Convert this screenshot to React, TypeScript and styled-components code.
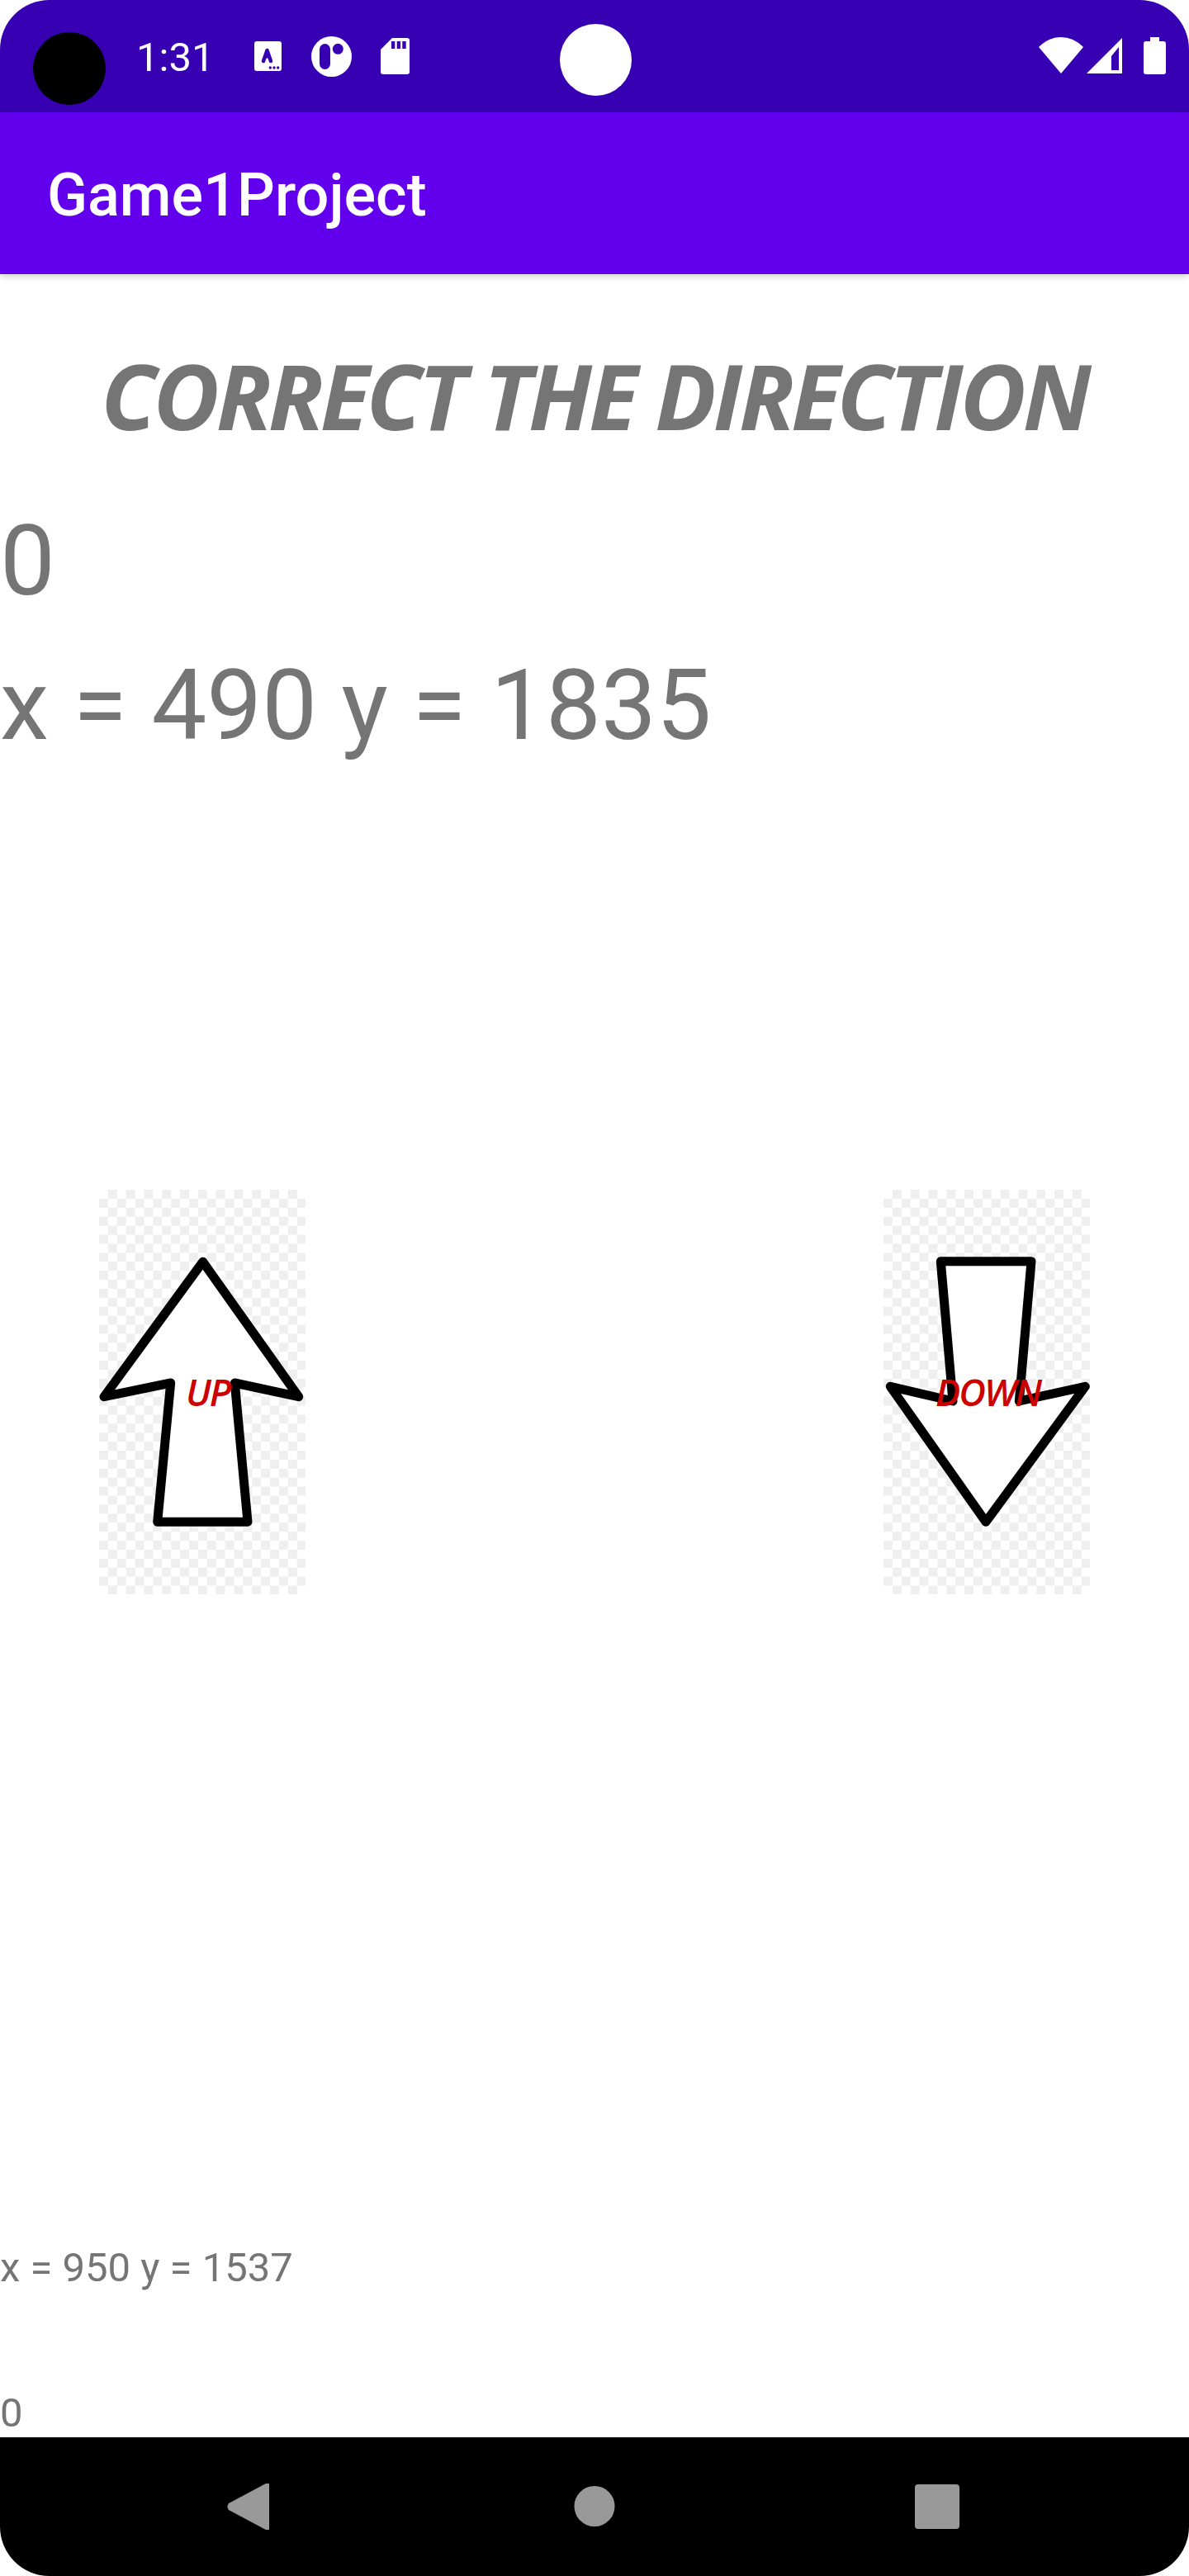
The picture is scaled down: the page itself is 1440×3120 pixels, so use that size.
import React, { FC } from 'react';
import styled, { createGlobalStyle } from 'styled-components';

const GlobalStyle = createGlobalStyle`
  html, body {
    margin: 0;
    padding: 0;
    background: #fff;
  }
`;

const Screen = styled.div`
  position: relative;
  display: flex;
  flex-direction: column;
  width: 1440px;
  height: 3120px;
  overflow: hidden;
  border-radius: 60px;
  background: #fff;
  font-family: Roboto, "Liberation Sans", sans-serif;
`;

const StatusBar = styled.div`
  display: flex;
  align-items: flex-start;
  flex: none;
  height: 136px;
  box-sizing: border-box;
  padding: 44px 28px 0 165px;
  background: #3700b3;
  color: #fff;
`;

const Clock = styled.span`
  width: 143px;
  font-size: 49px;
  line-height: 50px;
  height: 50px;
  margin-top: 1px;
`;

const StatusIcon = styled.svg<{ $gap?: number }>`
  flex: none;
  display: block;
  height: 50px;
  margin-left: ${({ $gap }) => $gap ?? 0}px;
`;

const StatusRight = styled.div`
  display: flex;
  margin-left: auto;
`;

const Camera = styled.div`
  position: absolute;
  left: 40px;
  top: 39px;
  width: 88px;
  height: 88px;
  border-radius: 50%;
  background: #000;
`;

const TouchDot = styled.div`
  position: absolute;
  left: 678px;
  top: 29px;
  width: 87px;
  height: 87px;
  border-radius: 50%;
  background: #fff;
`;

const AppBar = styled.header`
  display: flex;
  align-items: center;
  flex: none;
  height: 196px;
  box-sizing: border-box;
  padding: 4px 0 0 57px;
  background: #6200ee;
  color: #fff;
  font-size: 72px;
  font-weight: 500;
  box-shadow: 0 3px 8px rgba(0, 0, 0, 0.18);
  z-index: 1;
`;

const Content = styled.main`
  display: flex;
  flex-direction: column;
  flex: 1;
  min-height: 0;
  color: #757575;
`;

const Heading = styled.h1`
  margin: 103px 0 0;
  height: 86px;
  font-family: "Open Sans", sans-serif;
  font-size: 110px;
  font-style: italic;
  font-weight: 700;
  letter-spacing: -4px;
  line-height: 86px;
  text-align: center;
  white-space: nowrap;
`;

const Score = styled.div`
  margin-top: 88px;
  font-size: 119px;
  line-height: 141px;
`;

const Coords = styled.div`
  margin-top: 34px;
  font-size: 119px;
  line-height: 141px;
`;

const ArrowRow = styled.div`
  display: flex;
  justify-content: space-between;
  margin-top: 516px;
  padding: 0 120px;
`;

const ArrowButton = styled.div`
  position: relative;
  width: 250px;
  height: 490px;
  background: repeating-conic-gradient(#efefef 0 25%, #fff 0 50%) 0 0 / 21.8px 21.8px;
`;

const ArrowLabel = styled.span<{ $left: number }>`
  position: absolute;
  left: ${({ $left }) => $left}px;
  top: 217px;
  color: #cc0000;
  font-family: "Open Sans", sans-serif;
  font-size: 45px;
  font-style: italic;
  font-weight: 600;
  letter-spacing: -2px;
  line-height: 56px;
`;

const Footer = styled.div`
  display: flex;
  flex-direction: column;
  margin-top: auto;
  font-size: 49px;
  line-height: 57px;
`;

const SmallZero = styled.div`
  margin-top: 119px;
  margin-bottom: 1px;
`;

const NavBar = styled.nav`
  position: relative;
  flex: none;
  height: 168px;
  background: #000;
`;

const NavIcon = styled.svg`
  position: absolute;
  left: 0;
  top: 0;
`;

type ArrowPoints = string;

const UP_POINTS: ArrowPoints =
  '125.7,87.3 241.7,250.7 164.3,234 180,402.3 70.7,402.3 86.7,234 6,250.7';
const DOWN_POINTS: ArrowPoints =
  '69.3,86.7 179,86.7 164.3,256 244.3,238.3 124,402.3 8.3,238.3 84,256';

const Arrow: FC<{ points: ArrowPoints; label: string; labelLeft: number }> = ({
  points,
  label,
  labelLeft,
}) => (
  <ArrowButton>
    <svg width="250" height="490" viewBox="0 0 250 490">
      <polygon
        points={points}
        fill="#fff"
        stroke="#000"
        strokeWidth="11"
        strokeLinejoin="round"
      />
    </svg>
    <ArrowLabel $left={labelLeft}>{label}</ArrowLabel>
  </ArrowButton>
);

export default function App() {
  return (
    <Screen>
      <GlobalStyle />
      <StatusBar>
        <Clock>1:31</Clock>
        <StatusIcon width="33" viewBox="0 0 33 50">
          <rect x="0" y="6" width="33" height="36" rx="3" fill="#fff" />
          <polyline
            points="11,30 15.500,17 20,30"
            fill="none"
            stroke="#3700b3"
            strokeWidth="4.5"
            strokeLinecap="round"
            strokeLinejoin="round"
          />
          <path d="M12 25h7" stroke="#3700b3" strokeWidth="3" />
          <circle cx="19.300" cy="38" r="1.700" fill="#3700b3" />
          <circle cx="24" cy="38" r="1.700" fill="#3700b3" />
          <circle cx="28.700" cy="38" r="1.700" fill="#3700b3" />
        </StatusIcon>
        <StatusIcon width="49" viewBox="0 0 49 50" $gap={36}>
          <circle cx="24.500" cy="24.500" r="24.500" fill="#fff" />
          <rect x="10" y="9" width="13" height="31" rx="6.500" fill="#3700b3" />
          <circle cx="32.300" cy="15.300" r="6.500" fill="#3700b3" />
        </StatusIcon>
        <StatusIcon width="35" viewBox="0 0 35 50" $gap={35}>
          <path
            d="M14 2h18a3 3 0 0 1 3 3v38a3 3 0 0 1-3 3H3a3 3 0 0 1-3-3V16z"
            fill="#fff"
          />
          <path
            d="M13 6h4.300v9H13zM19.700 6H24v9h-4.300zM26.300 6h4.400v9h-4.400z"
            fill="#3700b3"
          />
        </StatusIcon>
        <StatusRight>
          <StatusIcon width="54" viewBox="0 0 54 50">
            <path d="M0 13Q12 1 27 1T54 13L27 45z" fill="#fff" />
          </StatusIcon>
          <StatusIcon width="45" viewBox="0 0 45 50" $gap={3}>
            <path
              fillRule="evenodd"
              d="M44 2V45H1zM40 13L31 24V41H40z"
              fill="#fff"
            />
          </StatusIcon>
          <StatusIcon width="27" viewBox="0 0 27 50" $gap={25}>
            <path
              d="M8 1H19V6H24a3 3 0 0 1 3 3V43a3 3 0 0 1-3 3H3a3 3 0 0 1-3-3V9a3 3 0 0 1 3-3H8z"
              fill="#fff"
            />
          </StatusIcon>
        </StatusRight>
      </StatusBar>
      <AppBar>Game1Project</AppBar>
      <Content>
        <Heading>CORRECT THE DIRECTION</Heading>
        <Score>0</Score>
        <Coords>x = 490 y = 1835</Coords>
        <ArrowRow>
          <Arrow points={UP_POINTS} label="UP" labelLeft={105} />
          <Arrow points={DOWN_POINTS} label="DOWN" labelLeft={63} />
        </ArrowRow>
        <Footer>
          <div>x = 950 y = 1537</div>
          <SmallZero>0</SmallZero>
        </Footer>
      </Content>
      <NavBar>
        <NavIcon width="1440" height="168" viewBox="0 0 1440 168">
          <path
            d="M326 56V112H322L277 88Q274 84 277 80L322 56z"
            fill="#999"
          />
          <circle cx="720" cy="83.500" r="24.500" fill="#999" />
          <rect x="1108" y="57" width="54" height="54" rx="4" fill="#999" />
        </NavIcon>
      </NavBar>
      <Camera />
      <TouchDot />
    </Screen>
  );
}
